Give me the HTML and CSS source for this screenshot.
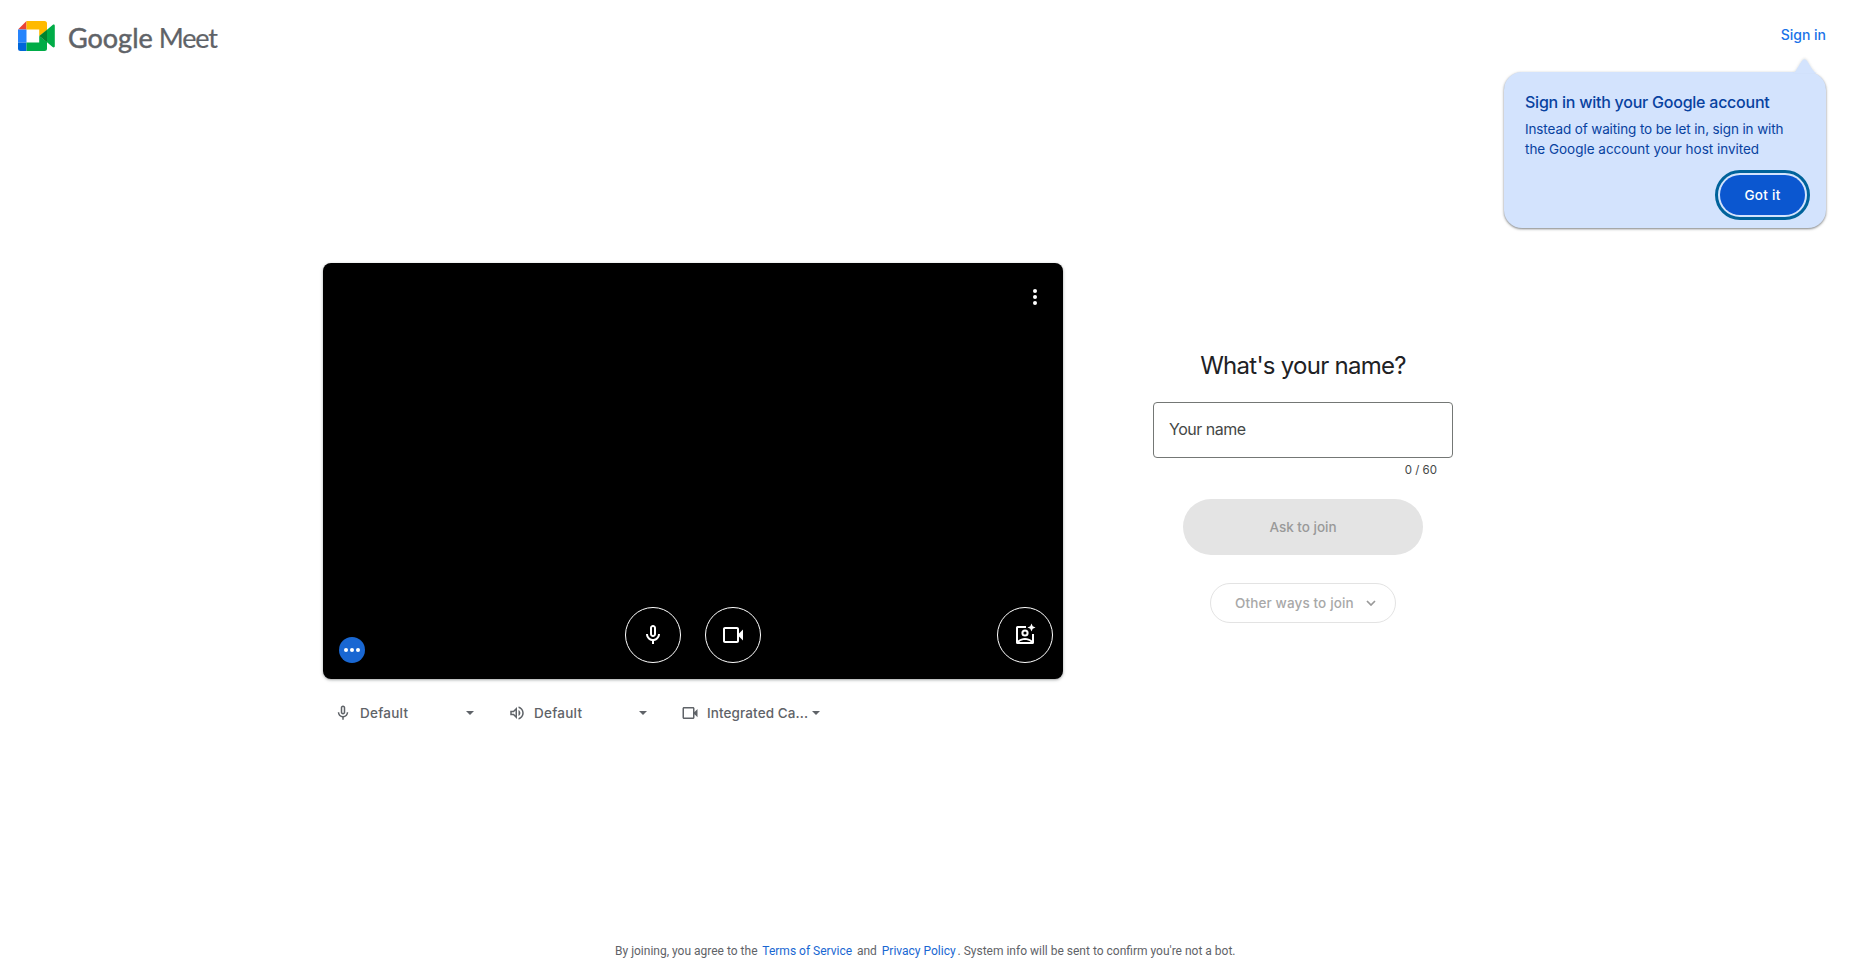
FILE: index.html
```html
<!DOCTYPE html>
<html lang="en">
<head>
<meta charset="utf-8">
<title>Google Meet</title>
<link rel="stylesheet" href="styles.css">
</head>
<body>
<svg class="defs" width="0" height="0">
  <symbol id="mic" viewBox="0 0 24 24"><path d="M12 14c1.66 0 3-1.34 3-3V5c0-1.66-1.34-3-3-3S9 3.34 9 5v6c0 1.66 1.34 3 3 3zm-1-9c0-.55.45-1 1-1s1 .45 1 1v6c0 .55-.45 1-1 1s-1-.45-1-1V5zm6 6c0 2.76-2.24 5-5 5s-5-2.24-5-5H5c0 3.53 2.61 6.43 6 6.92V21h2v-3.080c3.390-.490 6-3.390 6-6.920h-2z"/></symbol>
  <symbol id="cam" viewBox="0 0 24 24"><path d="M18 10.500V6c0-1.100-.900-2-2-2H4c-1.100 0-2 .900-2 2v12c0 1.100.900 2 2 2h12c1.100 0 2-.900 2-2v-4.500l4 4v-11l-4 4zM16 18H4V6h12v12z"/></symbol>
  <symbol id="speaker" viewBox="0 0 24 24"><path d="M3 9v6h4l5 5V4L7 9H3zm7-.170v6.340L7.830 13H5v-2h2.830L10 8.830zM16.500 12c0-1.770-1.020-3.290-2.500-4.030v8.050c1.480-.730 2.500-2.250 2.500-4.020zM14 3.230v2.060c2.890.860 5 3.540 5 6.710s-2.110 5.850-5 6.710v2.060c4.010-.910 7-4.490 7-8.770s-2.990-7.860-7-8.770z"/></symbol>
</svg>
<header class="top">
  <div class="brand">
    <svg class="logo" viewBox="0 0 37 30">
      <path fill="#ea4335" d="M0 8.500 8.500 0v8.500z"/>
      <path fill="#2684fc" d="M0 8.500h8.500v13H0z"/>
      <path fill="#0066da" d="M0 21.500v6A2.500 2.500 0 0 0 2.500 30h6v-8.500z"/>
      <path fill="#ffba00" d="M8.500 0h18A2.500 2.500 0 0 1 29 2.500v6.800L21.200 15V8.500H8.500z"/>
      <path fill="#00ac47" d="M8.500 21.500h12.700V15l7.800 6v6.500a2.500 2.500 0 0 1-2.500 2.500h-18z"/>
      <path fill="#00ac47" d="m29 8.700 5.600-4.700C35.500 3.200 36.800 3.500 36.800 4.700v20.600c0 1.200-1.300 1.500-2.200.7L29 21.300z"/>
      <path fill="#00832d" d="M21.200 15 29 8.700v12.600z"/>
    </svg>
    <div class="wordmark"><span class="word-google">Google</span><span class="word-meet">Meet</span></div>
  </div>
  <div class="account">
    <a class="signin">Sign in</a>
    <div class="promo">
      <svg class="promo-tip" viewBox="0 0 24 15"><path d="M0 15C3 14 4 10 8.500 3.500q3-4.500 6 0C18 9 20 14 24 15z"/></svg>
      <h2 class="promo-title">Sign in with your Google account</h2>
      <p class="promo-text"><span class="promo-line1">Instead of waiting to be let in, sign in with</span><br><span class="promo-line2">the Google account your host invited</span></p>
      <button class="gotit">Got it</button>
    </div>
  </div>
</header>
<main class="lobby">
  <section class="preview">
    <div class="video">
      <div class="video-top"><svg class="more" viewBox="0 0 24 24"><circle cx="12" cy="6" r="2"/><circle cx="12" cy="12" r="2"/><circle cx="12" cy="18" r="2"/></svg></div>
      <div class="video-bottom">
        <div class="status"><i></i><i></i><i></i></div>
        <div class="controls">
          <div class="round"><svg class="icon24"><use href="#mic"/></svg></div>
          <div class="round"><svg class="icon24"><use href="#cam"/></svg></div>
        </div>
        <div class="round"><svg class="icon24" viewBox="0 0 24 24"><path fill-rule="evenodd" d="M13 3H4.500A1.500 1.500 0 0 0 3 4.500v15A1.500 1.500 0 0 0 4.500 21h15a1.500 1.500 0 0 0 1.500-1.500V11h-2v6.600c-3.800-3.500-10.200-3.500-14 0V5h8zM6.200 19c3-2.600 8.600-2.600 11.600 0z"/><circle cx="12" cy="10" r="2.600" fill="none" stroke="currentColor" stroke-width="2"/><path d="m18.500.500 1.200 2.800 2.800 1.200-2.800 1.200-1.200 2.800-1.200-2.800-2.800-1.200 2.800-1.200z"/></svg></div>
      </div>
    </div>
    <div class="devices">
      <div class="device"><svg class="icon18"><use href="#mic"/></svg><span class="device-name">Default</span><i class="caret"></i></div>
      <div class="device device-speaker"><svg class="icon18"><use href="#speaker"/></svg><span class="device-name">Default</span><i class="caret"></i></div>
      <div class="device device-camera"><svg class="icon18"><use href="#cam"/></svg><span class="device-name">Integrated Ca...</span><i class="caret"></i></div>
    </div>
  </section>
  <section class="join">
    <h1 class="question">What's your name?</h1>
    <div class="field"><span class="label">Your name</span></div>
    <div class="counter">0 / 60</div>
    <button class="ask">Ask to join</button>
    <button class="other"><span class="other-label">Other ways to join</span><svg class="chevron" viewBox="0 0 10 6"><path d="m1 1 4 4 4-4"/></svg></button>
  </section>
</main>
<footer class="legal">By joining, you agree to the <a class="terms">Terms of Service</a> and <a class="privacy">Privacy Policy</a>. System info will be sent to confirm you're not a bot.</footer>
</body>
</html>
```
FILE: styles.css
```css
* { box-sizing: border-box; }
body { margin: 0; height: 966px; display: flex; flex-direction: column; overflow: hidden; background: #fff; font-family: Inter, "Open Sans", sans-serif; }
h1, h2, p { margin: 0; font-weight: 400; }
button { font-family: inherit; border: 0; padding: 0; }
svg { display: block; fill: currentColor; flex: none; }
.defs { position: absolute; }
.top { height: 263px; flex: none; display: flex; justify-content: space-between; padding: 21px 24px 0 18px; }
.brand { display: flex; gap: 13px; height: 30px; }
.logo { width: 37px; height: 30px; }
.wordmark { display: flex; gap: 6px; color: #5f6368; font: 400 27px/33px Lato, sans-serif; white-space: nowrap; }
.word-google { -webkit-text-stroke: .5px #5f6368; }
.word-meet { letter-spacing: -1.2px; -webkit-text-stroke: .2px #5f6368; }
.account { display: flex; flex-direction: column; align-items: flex-end; }
.signin { height: 51px; line-height: 27px; font-size: 14px; font-weight: 500; color: #1a73e8; white-space: nowrap; }
.promo { position: relative; width: 322px; height: 156px; display: flex; flex-direction: column; background: #d3e3fd; color: #0842a0; border-radius: 18px; padding: 19px 21px 13px; box-shadow: 0 1px 3px rgba(60,64,67,.35), 0 1px 2px rgba(60,64,67,.4); }
.promo-tip { position: absolute; width: 24px; height: 15px; right: 9px; top: -14px; fill: #d3e3fd; filter: drop-shadow(0 -1px 1px rgba(60,64,67,.14)); }
.promo-title { font-size: 16px; line-height: 22px; font-weight: 500; letter-spacing: -.24px; white-space: nowrap; }
.promo-text { margin-top: 6px; font-size: 13.5px; line-height: 20px; white-space: nowrap; }
.promo-line1 { letter-spacing: -.12px; }
.promo-line2 { letter-spacing: -.02px; }
.gotit { align-self: flex-end; flex: none; margin-top: 16px; width: 85px; height: 40px; border-radius: 20px; background: #0b57d0; color: #fff; font-size: 13.5px; font-weight: 500; letter-spacing: .3px; outline: 3px solid #00639b; outline-offset: 2px; }
.lobby { display: flex; padding-left: 323px; gap: 90px; }
.preview { width: 740px; }
.video { height: 416px; border-radius: 8px; background: #000; color: #fff; display: flex; flex-direction: column; justify-content: space-between; padding: 22px 10px 16px 16px; box-shadow: 0 1px 2px rgba(60,64,67,.3), 0 1px 3px 1px rgba(60,64,67,.15); }
.video-top { display: flex; justify-content: flex-end; padding-right: 6px; }
.more { width: 24px; height: 24px; }
.video-bottom { display: flex; justify-content: space-between; align-items: flex-end; }
.status { width: 26px; height: 26px; border-radius: 50%; background: #1967d2; display: flex; align-items: center; justify-content: center; gap: 2px; margin-right: 24px; }
.status i { width: 4px; height: 4px; border-radius: 50%; background: #fff; }
.controls { display: flex; gap: 24px; }
.round { width: 56px; height: 56px; border: 1px solid #fff; border-radius: 50%; display: flex; align-items: center; justify-content: center; }
.icon24 { width: 24px; height: 24px; }
.icon18 { width: 18px; height: 18px; }
.devices { display: flex; margin-top: 22px; color: #5f6368; }
.device { width: 173px; height: 24px; display: flex; align-items: center; padding: 0 22px 0 11px; font-size: 13.5px; font-weight: 500; letter-spacing: .25px; }
.device-speaker { padding-left: 12px; }
.device-camera { padding-left: 12px; letter-spacing: .1px; }
.device-name { margin-left: 8px; flex: 1 1 0; min-width: 0; white-space: nowrap; }
.caret { flex: none; border: 4px solid transparent; border-top-color: currentColor; border-bottom: 0; }
.join { width: 300px; display: flex; flex-direction: column; align-items: center; padding-top: 87px; }
.question { font-size: 24px; line-height: 32px; letter-spacing: -.73px; color: #202124; white-space: nowrap; }
.field { margin-top: 20px; width: 300px; height: 56px; border: 1px solid #747775; border-radius: 4px; padding: 0 15px; font-size: 16px; line-height: 53px; letter-spacing: -.48px; color: #444746; }
.counter { align-self: flex-end; margin: 4px 16px 0 0; font-size: 11.5px; line-height: 16px; color: #444746; }
.ask { margin-top: 21px; width: 240px; height: 56px; border-radius: 28px; background: #e4e4e4; color: #999; font-size: 13.5px; font-weight: 500; }
.other { margin-top: 28px; width: 186px; height: 40px; border: 1px solid #e3e3e3; border-radius: 20px; background: #fff; color: #a8a8a8; display: flex; align-items: center; padding: 0 19px 0 24px; justify-content: space-between; font-size: 13.5px; font-weight: 500; letter-spacing: .13px; white-space: nowrap; }
.chevron { width: 10px; height: 6px; fill: none; stroke: #999; stroke-width: 1.7; }
.legal { margin-top: auto; height: 23px; padding-left: 615px; font: 12px/16px Roboto, sans-serif; color: #5f6368; white-space: nowrap; }
.legal a { color: #1967d2; padding: 0 1.9px; }
```
